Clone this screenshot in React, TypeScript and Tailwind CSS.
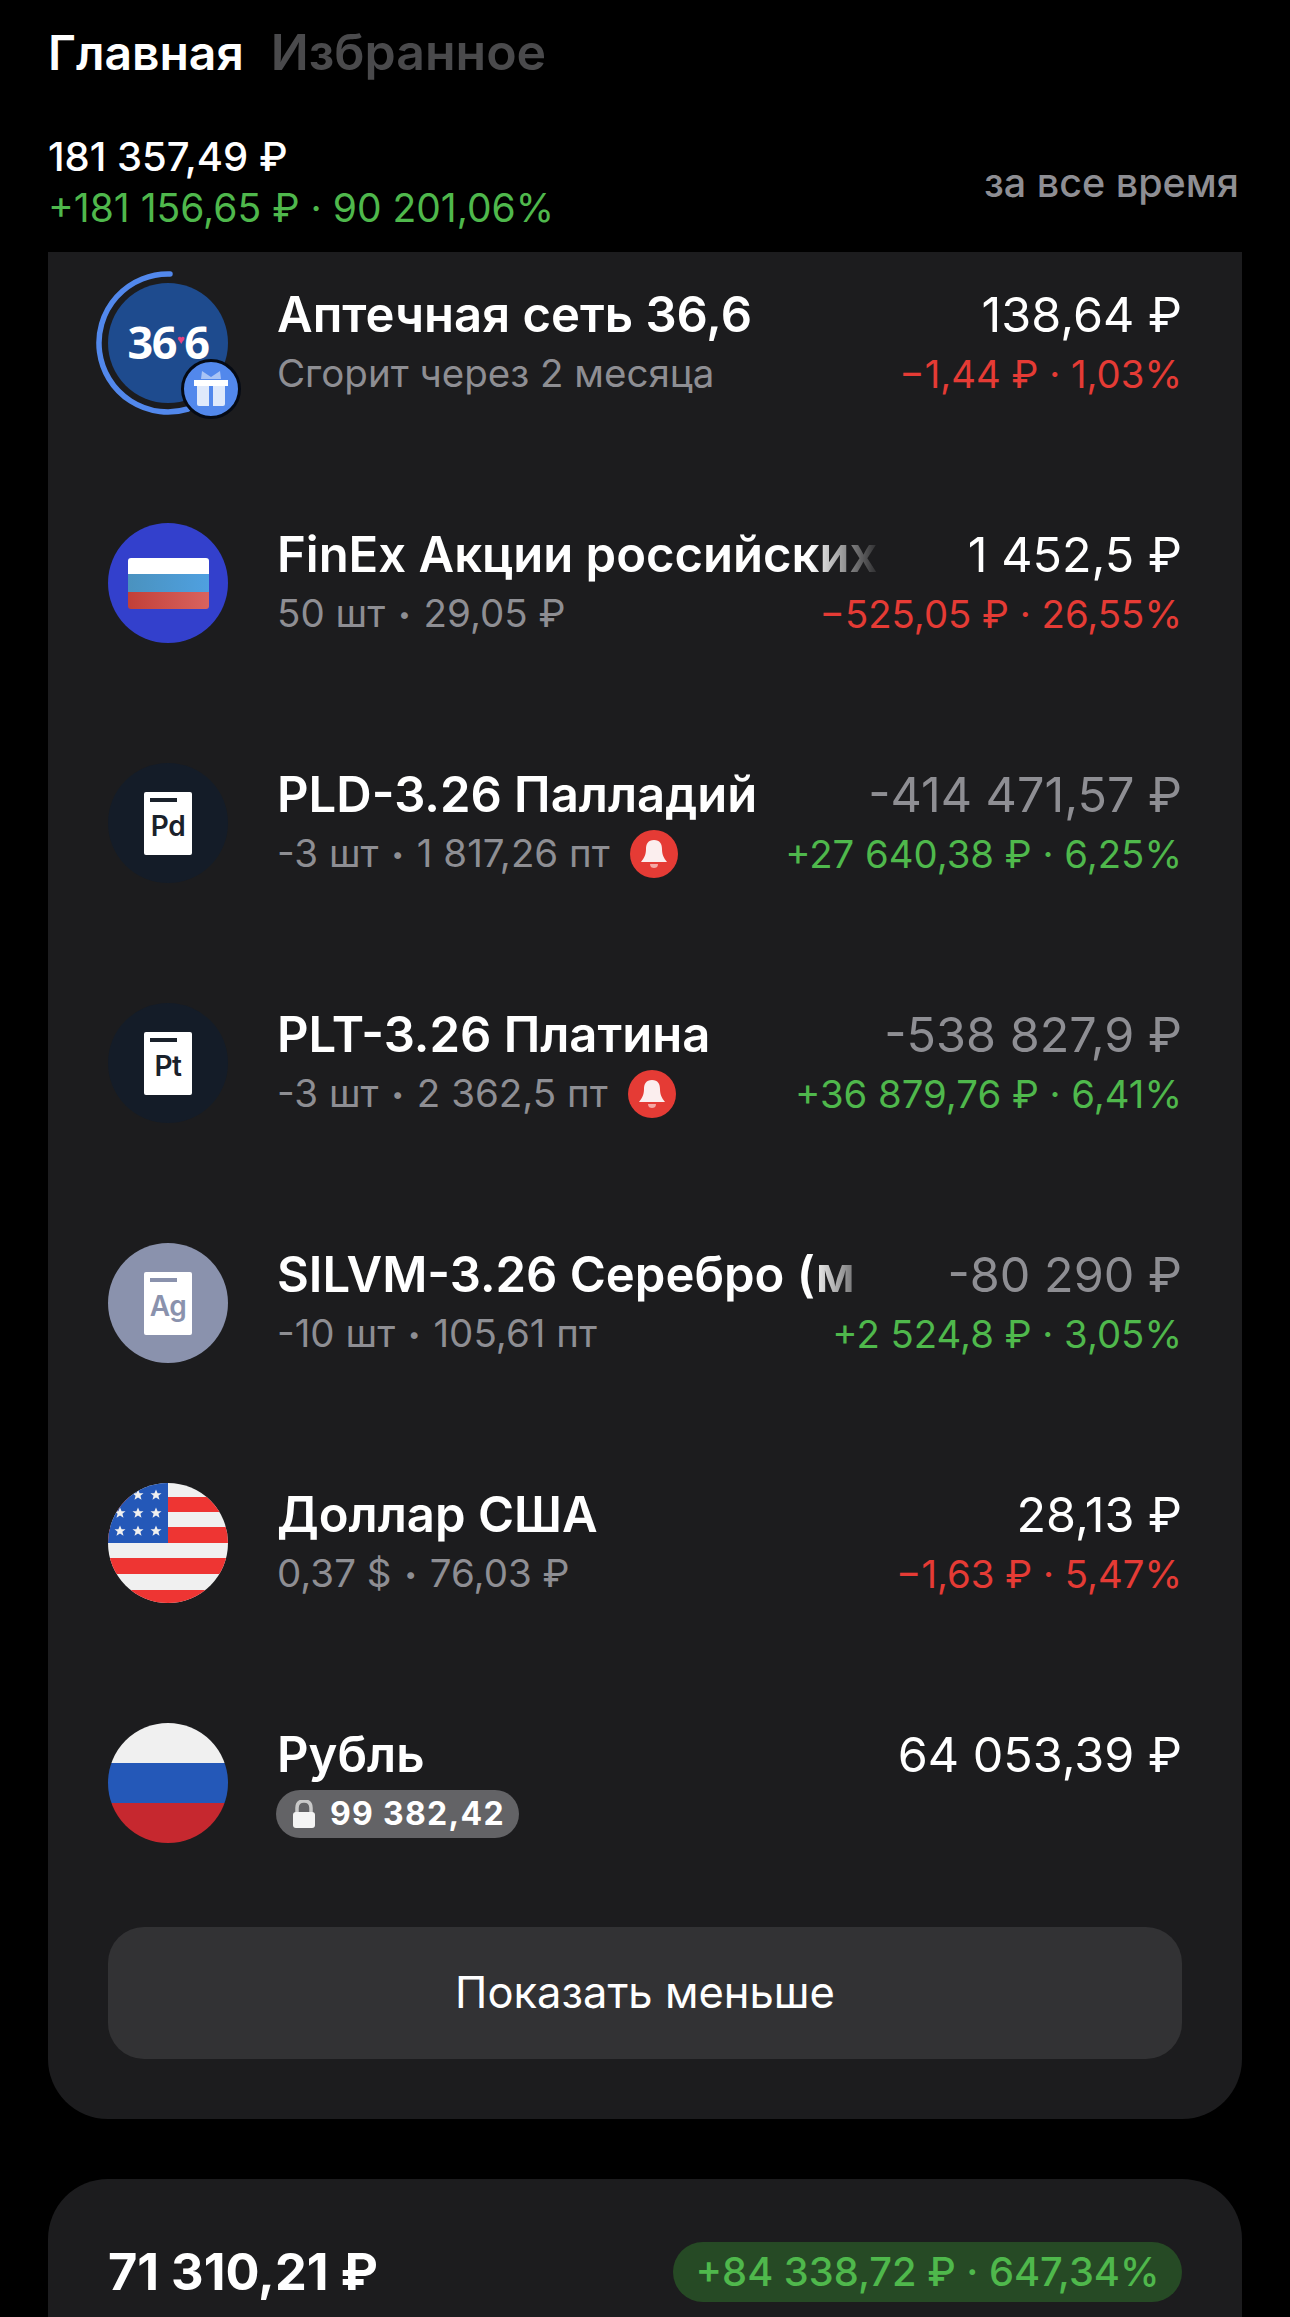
import React from 'react';

const Pd = ({ label, bg, ink }: { label: string; bg: string; ink: string }) => (
    <div className={`w-[120px] h-[120px] rounded-full flex items-center justify-center ${bg}`}>
        <div className="relative w-[48px] h-[63px] bg-white rounded-[2px] flex justify-center pt-[20px]">
            <div className={`absolute left-[6px] top-[6px] w-[27px] h-[4px] ${ink === 'dark' ? 'bg-[#1a212b]' : 'bg-[#8a92ad]'}`} />
            <span className={`text-[28px] leading-[28px] font-semibold tracking-[-0.5px] ${ink === 'dark' ? 'text-[#1a212b]' : 'text-[#8a92ad]'}`}>{label}</span>
        </div>
    </div>
);

const Pharmacy = () => (
    <div className="relative w-[120px] h-[120px] rounded-full bg-[#1e4b8e] flex items-center justify-center">
        <svg className="absolute left-[-12px] top-[-12px]" width="144" height="144" viewBox="0 0 144 144" fill="none">
            <path d="M74 3 A69 69 0 1 0 92 138" stroke="#5288ec" strokeWidth="5.5" strokeLinecap="round" />
        </svg>
        <span className="mt-[-3px] text-[45px] leading-none font-bold text-white tracking-[-1.5px] font-['Open_Sans',sans-serif] flex items-center">
            36<span className="text-[#e8417f] text-[13px] mx-[1px] mt-[-4px]">♥</span>6
        </span>
        <div className="absolute left-[73px] top-[76px] w-[60px] h-[60px] rounded-full bg-[#5288ec] border-[3px] border-[#050a14] flex items-center justify-center">
            <svg width="36" height="38" viewBox="0 0 36 38">
                <path d="M9 1 L18 7 L27 1 L28 9 H8 Z" fill="#a9c4f5" />
                <rect x="1" y="10" width="34" height="6" fill="#ffffff" />
                <path d="M4 16 H16 V36 H6 Q4 36 4 34 Z" fill="#dfe9fb" />
                <path d="M20 16 H32 V34 Q32 36 30 36 H20 Z" fill="#dfe9fb" />
            </svg>
        </div>
    </div>
);

const FinexIcon = () => (
    <div className="w-[120px] h-[120px] rounded-full bg-[#3340cc] flex items-center justify-center">
        <div className="w-[81px] h-[51px] rounded-[3px] overflow-hidden flex flex-col">
            <div className="h-[16px] bg-white" />
            <div className="h-[18px] bg-gradient-to-r from-[#4a92bf] to-[#4fa0e0]" />
            <div className="h-[17px] bg-gradient-to-r from-[#c23f38] to-[#d9635f]" />
        </div>
    </div>
);

const UsFlag = () => (
    <svg width="120" height="120" viewBox="0 0 120 120">
        <defs>
            <clipPath id="usc"><circle cx="60" cy="60" r="60" /></clipPath>
        </defs>
        <g clipPath="url(#usc)">
            <rect width="120" height="120" fill="#f0f0f0" />
            <rect y="14" width="120" height="15" fill="#ee3533" />
            <rect y="44" width="120" height="16" fill="#ee3533" />
            <rect y="75" width="120" height="16" fill="#ee3533" />
            <rect y="107" width="120" height="15" fill="#ee3533" />
            <rect width="60" height="60" fill="#2458b8" />
            {[[30, 12], [48, 12], [12, 30], [30, 30], [48, 30], [12, 48], [30, 48], [48, 48]].map(([x, y]) => (
                <polygon
                    key={`${x}-${y}`}
                    transform={`translate(${x} ${y})`}
                    fill="#f0f0f0"
                    points="0,-5.5 1.6,-1.7 5.5,-1.7 2.4,0.8 3.5,4.8 0,2.4 -3.5,4.8 -2.4,0.8 -5.5,-1.7 -1.6,-1.7"
                />
            ))}
        </g>
    </svg>
);

const RuFlag = () => (
    <div className="w-[120px] h-[120px] rounded-full overflow-hidden flex flex-col">
        <div className="h-[40px] bg-[#f0f0f0]" />
        <div className="h-[40px] bg-[#2458b8]" />
        <div className="h-[40px] bg-[#c6282f]" />
    </div>
);

const Bell = () => (
    <div className="ml-[20px] w-[48px] h-[48px] rounded-full bg-[#e53b35] flex items-center justify-center">
        <svg width="28" height="30" viewBox="0 0 28 30">
            <path d="M14 1 C8 1 6 5 6 10 C6 16 4 19 1 23 H27 C24 19 22 16 22 10 C22 5 20 1 14 1 Z" fill="#fbeeee" />
            <path d="M10 25 H18 C18 28 16 29 14 29 C12 29 10 28 10 25 Z" fill="#f4a9a5" />
        </svg>
    </div>
);

const rows = [
    { icon: <FinexIcon />, name: 'FinEx Акции российских', fade: true, sub: ['50 шт', '29,05 ₽'], value: '1 452,5 ₽', muted: false, change: '−525,05 ₽ · 26,55%', up: false },
    { icon: <Pd label="Pd" bg="bg-[#141c28]" ink="dark" />, name: 'PLD-3.26 Палладий', sub: ['-3 шт', '1 817,26 пт'], bell: true, value: '-414 471,57 ₽', muted: true, change: '+27 640,38 ₽ · 6,25%', up: true },
    { icon: <Pd label="Pt" bg="bg-[#141c28]" ink="dark" />, name: 'PLT-3.26 Платина', sub: ['-3 шт', '2 362,5 пт'], bell: true, value: '-538 827,9 ₽', muted: true, change: '+36 879,76 ₽ · 6,41%', up: true },
    { icon: <Pd label="Ag" bg="bg-[#8a92ad]" ink="light" />, name: 'SILVM-3.26 Серебро (м', fade: true, sub: ['-10 шт', '105,61 пт'], value: '-80 290 ₽', muted: true, change: '+2 524,8 ₽ · 3,05%', up: true },
    { icon: <UsFlag />, name: 'Доллар США', sub: ['0,37 $', '76,03 ₽'], value: '28,13 ₽', muted: false, change: '−1,63 ₽ · 5,47%', up: false },
];

const Row = ({ item }: { item: any }) => (
    <div className="h-[120px] flex">
        <div className="w-[120px] shrink-0">{item.icon}</div>
        <div className="ml-[49px] flex-1 flex justify-between relative">
            <div className="pt-[3px]">
                <div className={`text-[49px] leading-[58px] font-semibold text-white whitespace-nowrap overflow-hidden ${item.fade ? 'w-[606px] [mask-image:linear-gradient(to_right,black_88%,transparent_100%)]' : ''}`}>
                    {item.name}
                </div>
                <div className="flex items-center h-[50px] mt-[5px] text-[38.5px] text-[#8e8e93] whitespace-nowrap">
                    {item.sub.length > 1 ? (
                        <>
                            {item.sub[0]}
                            <span className="text-[22px] mx-[13px]">•</span>
                            {item.sub[1]}
                        </>
                    ) : (
                        item.sub[0]
                    )}
                    {item.bell && <Bell />}
                </div>
            </div>
            <div className="absolute right-0 top-[3px] text-right whitespace-nowrap">
                <div className={`text-[48.5px] leading-[58px] ${item.muted ? 'text-[#8e8e93]' : 'text-white'}`}>{item.value}</div>
                <div className={`text-[38.3px] leading-[50px] mt-[5px] ${item.up ? 'text-[#4fb84c]' : 'text-[#e53b35]'}`}>{item.change}</div>
            </div>
        </div>
    </div>
);

export default function App() {
    return (
        <div className="h-[2317px] overflow-hidden bg-black font-['Inter',sans-serif]">
            <div className="h-[82px] px-[48px] pt-[22px] flex items-baseline gap-[27px] leading-[60px] font-semibold">
                <span className="text-[48px] text-white">Главная</span>
                <span className="text-[50px] text-[#4a4a4c]">Избранное</span>
            </div>

            <div className="px-[48px] mt-[50px] h-[100px] flex justify-between items-center">
                <div>
                    <div className="text-[40px] leading-[50px] font-medium text-white">181 357,49 ₽</div>
                    <div className="text-[39px] leading-[50px] mt-[1px] text-[#4fb84c]">+181 156,65 ₽ · 90 201,06%</div>
                </div>
                <div className="text-[39.5px] font-medium text-[#8e8e93] mt-[3px] pr-[3px]">за все время</div>
            </div>

            <div className="mx-[48px] mt-[20px] bg-[#1c1c1e] rounded-b-[60px] px-[60px] pt-[31px] pb-[60px]">
                <div className="flex flex-col gap-[120px]">
                    <Row item={{ icon: <Pharmacy />, name: 'Аптечная сеть 36,6', sub: ['Сгорит через 2 месяца'], value: '138,64 ₽', muted: false, change: '−1,44 ₽ · 1,03%', up: false }} />
                    {rows.map((item) => (
                        <Row key={item.name} item={item} />
                    ))}
                    <div className="h-[120px] flex">
                        <div className="w-[120px] shrink-0"><RuFlag /></div>
                        <div className="ml-[49px] flex-1 flex justify-between">
                            <div className="pt-[3px]">
                                <div className="text-[49px] leading-[58px] font-semibold text-white">Рубль</div>
                                <div className="ml-[-1px] mt-[6px] w-[243px] h-[48px] rounded-full bg-[#636366] flex items-center pl-[16px]">
                                    <svg width="24" height="28" viewBox="0 0 24 28">
                                        <path d="M5 13 V8 C5 3 8 1 12 1 C16 1 19 3 19 8 V13" fill="none" stroke="#c9c9c9" strokeWidth="3.5" />
                                        <rect x="1" y="12" width="22" height="16" rx="3" fill="#f4f4f4" />
                                    </svg>
                                    <span className="ml-[14px] text-[32px] font-bold tracking-[1.3px] text-white">99 382,42</span>
                                </div>
                            </div>
                            <div className="pt-[3px] text-[48.5px] leading-[58px] text-white">64 053,39 ₽</div>
                        </div>
                    </div>
                </div>
                <div className="mt-[84px] h-[132px] rounded-[36px] bg-[#323234] flex items-center justify-center text-[43.5px] text-white">
                    Показать меньше
                </div>
            </div>

            <div className="mx-[48px] mt-[60px] h-[200px] bg-[#1c1c1e] rounded-t-[60px] px-[60px] pt-[63px] flex justify-between items-start">
                <div className="text-[50.5px] leading-[60px] font-bold text-white">71 310,21 ₽</div>
                <div className="w-[509px] h-[60px] rounded-full bg-[#264a25] flex items-center justify-center text-[39.8px] font-medium text-[#4fb84c] whitespace-nowrap">
                    +84 338,72 ₽ · 647,34%
                </div>
            </div>
        </div>
    );
}
